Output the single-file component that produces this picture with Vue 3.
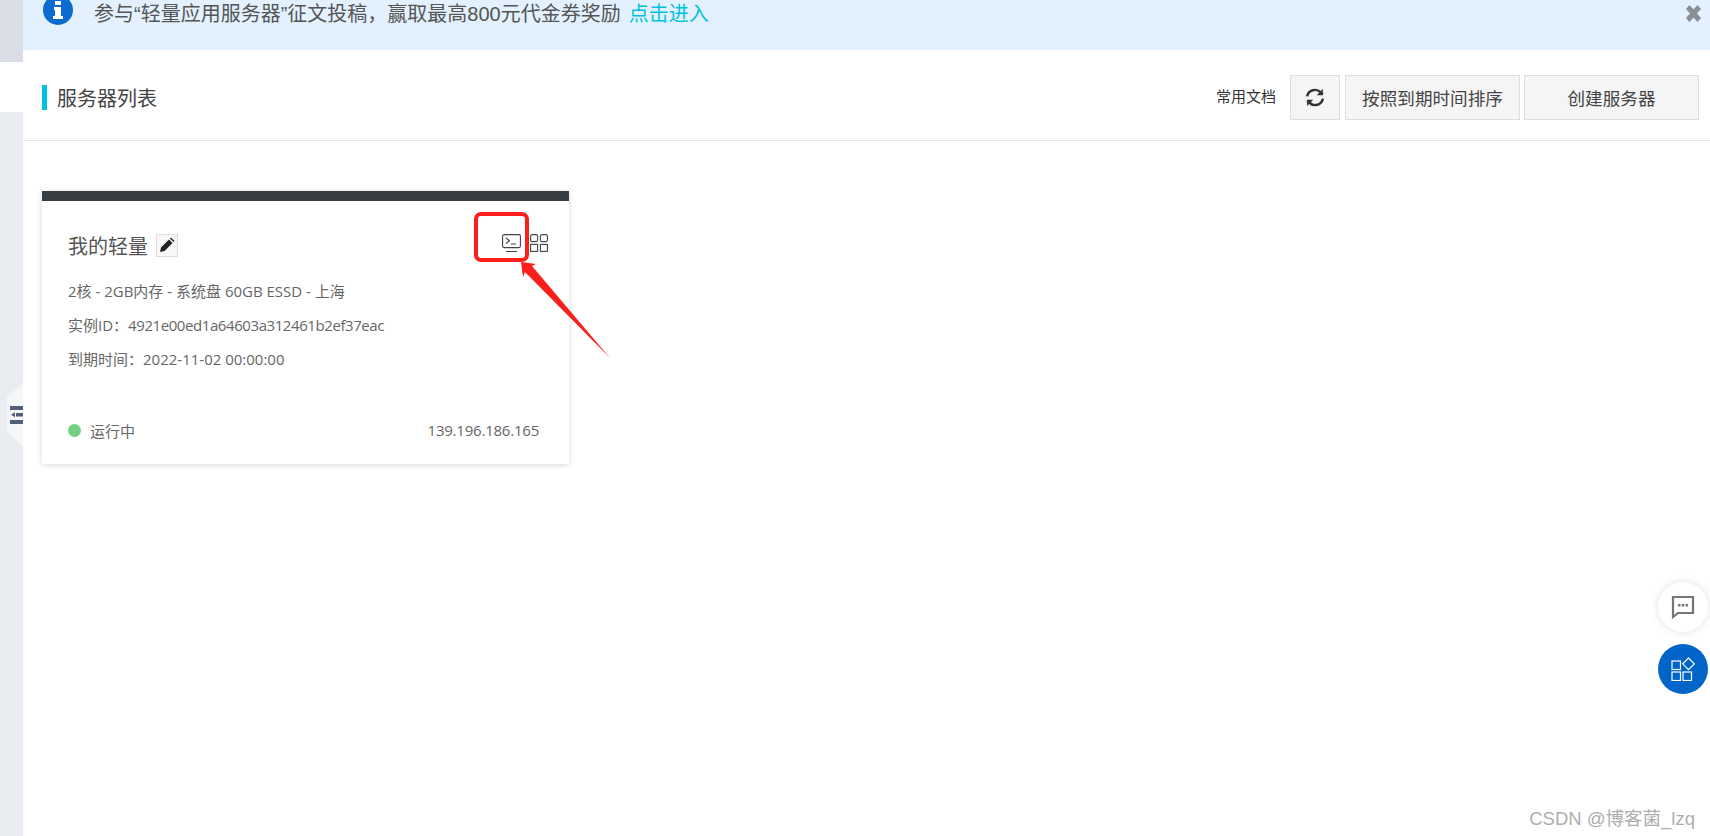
<script setup>
const specs = [
  { label: '2核 - 2GB内存 - 系统盘 60GB ESSD - 上海', value: '' },
  { label: '实例ID：', value: '4921e00ed1a64603a312461b2ef37eac', tight: true },
  { label: '到期时间：', value: '2022-11-02 00:00:00' }
]
</script>

<template>
  <div class="page">
    <aside class="side">
      <div class="side-top"></div>
      <div class="side-gap"></div>
      <div class="side-rest"></div>
      <div class="side-tab">
        <svg width="13" height="18" viewBox="0 0 13 18">
          <path d="M0 0h13v4H0zM0 14h13v4H0z" fill="#525f78" />
          <path d="M6 7h7v3.500H6zM1 8.700l4-2.500v5z" fill="#525f78" />
        </svg>
      </div>
    </aside>

    <main class="main">
      <div class="banner">
        <svg class="info" width="30" height="30" viewBox="0 0 30 30">
          <circle cx="15" cy="15" r="15" fill="#0a6cce" />
          <path d="M12 6h6v4h-6zM11 12h7v9h2v3H10v-3h2v-6h-1z" fill="#fff" />
        </svg>
        <span class="banner-text">参与“轻量应用服务器”征文投稿，赢取最高800元代金券奖励</span>
        <a class="banner-link">点击进入</a>
        <svg class="close" width="15" height="17" viewBox="2 2 13 13" preserveAspectRatio="none">
          <path d="M2 5l3-3 3.500 3.500L12 2l3 3-3.500 3.500L15 12l-3 3-3.500-3.500L5 15l-3-3 3.500-3.500z" fill="#8a8f96" />
        </svg>
      </div>

      <header class="head">
        <h1 class="title">服务器列表</h1>
        <span class="docs">常用文档</span>
        <button class="btn btn-icon">
          <svg width="18" height="19" viewBox="1 1 16 16" fill="none" stroke="#333" stroke-width="2.200">
            <path d="M2 8a7 7 0 0 1 12-3.500L16 6" />
            <path d="M16 1.500V7h-5.500" fill="#333" stroke="none" />
            <path d="M16 10a7 7 0 0 1-12 3.500L2 12" />
            <path d="M2 16.500V11h5.500" fill="#333" stroke="none" />
          </svg>
        </button>
        <button class="btn btn-sort">按照到期时间排序</button>
        <button class="btn btn-create">创建服务器</button>
      </header>

      <section class="content">
        <article class="card">
          <div class="card-top">
            <span class="name">我的轻量</span>
            <span class="edit">
              <svg width="16" height="16" viewBox="0 0 16 16">
                <path d="M1 15l1-4.500 8-8 3.500 3.500-8 8zM11 1.500l1-1 3.500 3.500-1 1z" fill="#222" />
              </svg>
            </span>
            <div class="tools">
              <svg width="19" height="19" viewBox="0 0 19 19" fill="none" stroke="#444" stroke-width="1.100">
                <rect x="0.600" y="0.600" width="17.800" height="13" rx="1.500" />
                <path d="M4 4l3.500 2.700L4 9.500M9 10h5M4 17.500h11" />
              </svg>
              <svg width="18" height="18" viewBox="0 0 18 18" fill="none" stroke="#444" stroke-width="1.100">
                <rect x="0.600" y="0.600" width="7" height="7" rx="1.500" />
                <rect x="10.400" y="0.600" width="7" height="7" rx="1.500" />
                <rect x="0.600" y="10.400" width="7" height="7" />
                <rect x="10.400" y="10.400" width="7" height="7" />
              </svg>
            </div>
          </div>
          <p v-for="line in specs" :key="line.label" class="spec">
            {{ line.label }}<span :class="{ tight: line.tight }">{{ line.value }}</span>
          </p>
          <div class="card-foot">
            <i class="dot"></i>
            <span>运行中</span>
            <span class="ip">139.196.186.165</span>
          </div>
        </article>
      </section>
    </main>

    <!-- annotation drawn over the screenshot -->
    <svg class="mark" width="160" height="170" viewBox="0 0 160 170">
      <rect x="2" y="2" width="51" height="46" rx="5" fill="none" stroke="#fb1f1b" stroke-width="4" />
      <path d="M47 50L62 52 58 54 136 146 51 60 49 65z" fill="#fb1f1b" />
    </svg>

    <div class="float float-chat">
      <svg width="24" height="24" viewBox="0 0 24 24">
        <path d="M2 2h20v16H7l-5 4z" fill="none" stroke="#757575" stroke-width="2.200" />
        <path d="M7 9h2.500v2.500H7zM10.800 9h2.500v2.500h-2.500zM14.600 9h2.500v2.500h-2.500z" fill="#757575" />
      </svg>
    </div>
    <div class="float float-app">
      <svg width="24" height="24" viewBox="0 0 24 24" fill="none" stroke="#fff" stroke-width="1.200">
        <rect x="1" y="4" width="8.500" height="8.500" />
        <rect x="1" y="15" width="8.500" height="8.500" />
        <rect x="12" y="15" width="8.500" height="8.500" />
        <path d="M17.500 1l5.800 5.800-5.800 5.800-5.800-5.800z" />
      </svg>
    </div>

    <div class="watermark">CSDN @博客菌_lzq</div>
  </div>
</template>

<style scoped>
.page {
  position: relative;
  display: flex;
  height: 836px;
  overflow: hidden;
  background: #fff;
  font-family: "Noto Sans CJK SC", sans-serif;
  color: #555;
}

.side {
  position: relative;
  display: flex;
  flex-direction: column;
  flex: 0 0 23px;
}

.side-top {
  height: 62px;
  background: #d9dee6;
}

.side-gap {
  height: 50px;
}

.side-rest {
  flex: 1;
  background: #e9ecf1;
}

.side-tab {
  position: absolute;
  left: 7px;
  top: 383px;
  width: 16px;
  height: 63px;
  display: flex;
  align-items: center;
  justify-content: flex-end;
  background: #f5f6f7;
  clip-path: polygon(100% 0, 100% 100%, 0 78%, 0 22%);
}

.main {
  flex: 1;
  min-width: 0;
}

.banner {
  position: relative;
  display: flex;
  align-items: flex-start;
  height: 50px;
  padding-left: 20px;
  background: #e2f1fd;
  font-family: "Liberation Sans", "Noto Sans CJK SC", sans-serif;
  font-size: 20px;
  line-height: 28px;
  overflow: hidden;
}

.info {
  margin: -5px 21px 0 0;
  flex: none;
}

.banner-link {
  margin-left: 8px;
  color: #00c1de;
}

.close {
  position: absolute;
  right: 9px;
  top: 5px;
}

.head {
  display: flex;
  align-items: center;
  box-sizing: border-box;
  height: 91px;
  padding: 5px 11px 0 19px;
  border-bottom: 1px solid #e3e5e8;
}

.title {
  margin: 0 auto 0 0;
  padding-left: 10px;
  border-left: 5px solid #00c1de;
  height: 25px;
  font-size: 20px;
  font-weight: 400;
  line-height: 25px;
  color: #444;
}

.docs {
  margin: 0 14px 5px 0;
  font-size: 15px;
  color: #333;
}

.btn {
  height: 45px;
  padding: 0;
  border: 1px solid #dedede;
  background: #f5f5f5;
  font-family: inherit;
  font-size: 17.600px;
  color: #444;
  display: flex;
  align-items: center;
  justify-content: center;
}

.btn-icon {
  width: 50px;
  margin-right: 5px;
}

.btn-sort {
  width: 175px;
  margin-right: 4px;
}

.btn-create {
  width: 175px;
}

.content {
  padding: 50px 0 0 19px;
}

.card {
  width: 527px;
  height: 273px;
  box-sizing: border-box;
  padding: 30px 30px 0 26px;
  border-top: 10px solid #373d41;
  background: #fff;
  box-shadow: 0 1px 6px rgba(0, 0, 0, 0.16);
  font-family: "Open Sans", "Noto Sans CJK SC", sans-serif;
  font-size: 15px;
  color: #666;
}

.card-top {
  position: relative;
  display: flex;
  align-items: center;
  height: 28px;
  margin-bottom: 15px;
}

.name {
  font-family: "Noto Sans CJK SC", sans-serif;
  font-size: 20px;
  color: #555;
}

.edit {
  display: flex;
  align-items: center;
  justify-content: center;
  width: 22px;
  height: 23px;
  margin-left: 8px;
  border: 1px solid #dedede;
  box-sizing: border-box;
  background: #f7f7f7;
}

.tools {
  position: absolute;
  right: -9px;
  top: 3px;
  display: flex;
  gap: 9px;
}

.spec {
  margin: 0;
  height: 34px;
  line-height: 34px;
  white-space: nowrap;
}

.tight {
  letter-spacing: -0.420px;
}

.card-foot {
  display: flex;
  align-items: center;
  margin-top: 42px;
  height: 24px;
}

.dot {
  width: 13px;
  height: 13px;
  margin-right: 9px;
  border-radius: 50%;
  background: #72d080;
}

.ip {
  margin-left: auto;
  letter-spacing: -0.220px;
}

.mark {
  position: absolute;
  left: 474px;
  top: 212px;
}

.float {
  position: absolute;
  left: 1658px;
  width: 50px;
  height: 50px;
  display: flex;
  align-items: center;
  justify-content: center;
  border-radius: 50%;
}

.float-chat {
  top: 582px;
  background: #fff;
  box-shadow: 0 0 8px rgba(0, 0, 0, 0.12);
}

.float-app {
  top: 644px;
  background: #0064c8;
}

.watermark {
  position: absolute;
  right: 15px;
  top: 806px;
  font-family: "Liberation Sans", "Noto Sans CJK SC", sans-serif;
  font-size: 18.500px;
  line-height: 26px;
  color: #aeaeae;
}
</style>
